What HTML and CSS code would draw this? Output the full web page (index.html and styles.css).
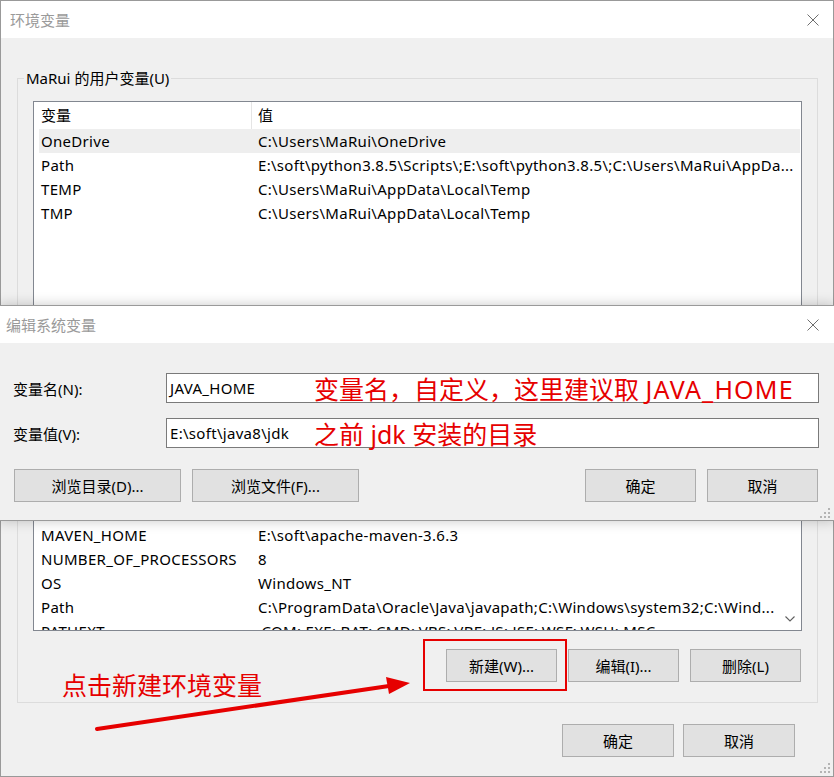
FILE: index.html
```html
<!DOCTYPE html>
<html lang="zh-CN">
<head>
<meta charset="utf-8">
<title>环境变量</title>
<link rel="stylesheet" href="styles.css">
</head>
<body>
<div class="window">
  <div class="titlebar">
    <span class="title">环境变量</span>
    <svg class="close" viewBox="0 0 12 12"><path d="M0.5 0.5 L11.5 11.5 M11.5 0.5 L0.5 11.5" stroke="#6e6e6e" stroke-width="1" fill="none"/></svg>
  </div>
  <div class="content">
    <div class="group group-user">
      <div class="legend">MaRui 的用户变量(U)</div>
      <div class="list list-user">
        <div class="list-main">
          <div class="row head"><span class="c1">变量</span><span class="c2">值</span></div>
          <div class="row sel"><span class="c1">OneDrive</span><span class="c2">C:\Users\MaRui\OneDrive</span></div>
          <div class="row"><span class="c1">Path</span><span class="c2">E:\soft\python3.8.5\Scripts\;E:\soft\python3.8.5\;C:\Users\MaRui\AppDa...</span></div>
          <div class="row"><span class="c1">TEMP</span><span class="c2">C:\Users\MaRui\AppData\Local\Temp</span></div>
          <div class="row"><span class="c1">TMP</span><span class="c2">C:\Users\MaRui\AppData\Local\Temp</span></div>
        </div>
      </div>
    </div>
    <div class="group group-sys">
      <div class="legend">系统变量(S)</div>
      <div class="list list-sys">
        <div class="list-main">
          <div class="row head"><span class="c1">变量</span><span class="c2">值</span></div>
          <div class="row"><span class="c1">DriverData</span><span class="c2">C:\Windows\System32\Drivers\DriverData</span></div>
          <div class="row"><span class="c1">MAVEN_HOME</span><span class="c2">E:\soft\apache-maven-3.6.3</span></div>
          <div class="row"><span class="c1">NUMBER_OF_PROCESSORS</span><span class="c2">8</span></div>
          <div class="row"><span class="c1">OS</span><span class="c2">Windows_NT</span></div>
          <div class="row"><span class="c1">Path</span><span class="c2">C:\ProgramData\Oracle\Java\javapath;C:\Windows\system32;C:\Wind...</span></div>
          <div class="row"><span class="c1">PATHEXT</span><span class="c2">.COM;.EXE;.BAT;.CMD;.VBS;.VBE;.JS;.JSE;.WSF;.WSH;.MSC</span></div>
        </div>
        <div class="vscroll">
          <svg class="chev" viewBox="0 0 10 6"><path d="M0.5 0.5 L5 5 L9.5 0.5" stroke="#606060" stroke-width="1.1" fill="none"/></svg>
        </div>
      </div>
      <div class="btn-row">
        <button class="btn">新建(W)...</button>
        <button class="btn">编辑(I)...</button>
        <button class="btn">删除(L)</button>
      </div>
    </div>
    <div class="footer">
      <button class="btn btn-footer">确定</button>
      <button class="btn btn-footer">取消</button>
    </div>
  </div>
  <svg class="grip grip-main" viewBox="0 0 12 12"><g fill="#b4b4b4"><rect x="9" y="1" width="2" height="2"/><rect x="5" y="5" width="2" height="2"/><rect x="9" y="5" width="2" height="2"/><rect x="1" y="9" width="2" height="2"/><rect x="5" y="9" width="2" height="2"/><rect x="9" y="9" width="2" height="2"/></g></svg>
</div>

<div class="dialog">
  <div class="dlg-title">
    <span class="title">编辑系统变量</span>
    <svg class="close" viewBox="0 0 12 12"><path d="M0.5 0.5 L11.5 11.5 M11.5 0.5 L0.5 11.5" stroke="#6e6e6e" stroke-width="1" fill="none"/></svg>
  </div>
  <div class="dlg-body">
    <div class="field">
      <label class="field-label">变量名(N):</label>
      <div class="input">JAVA_HOME<span class="note">变量名，自定义，这里建议取 <span class="note-latin">JAVA_HOME</span></span></div>
    </div>
    <div class="field">
      <label class="field-label">变量值(V):</label>
      <div class="input">E:\soft\java8\jdk<span class="note">之前 jdk 安装的目录</span></div>
    </div>
    <div class="dlg-buttons">
      <div class="btn-group">
        <button class="btn btn-wide">浏览目录(D)...</button>
        <button class="btn btn-wide">浏览文件(F)...</button>
      </div>
      <div class="btn-group">
        <button class="btn">确定</button>
        <button class="btn">取消</button>
      </div>
    </div>
  </div>
  <svg class="grip grip-dlg" viewBox="0 0 12 12"><g fill="#b4b4b4"><rect x="9" y="1" width="2" height="2"/><rect x="5" y="5" width="2" height="2"/><rect x="9" y="5" width="2" height="2"/><rect x="1" y="9" width="2" height="2"/><rect x="5" y="9" width="2" height="2"/><rect x="9" y="9" width="2" height="2"/></g></svg>
</div>

<div class="annot-box"></div>
<div class="annot-text">点击新建环境变量</div>
<svg class="annot-arrow" viewBox="0 0 834 777">
  <path d="M97 729 L389 686" stroke="#e60000" stroke-width="4" stroke-linecap="round" fill="none"/>
  <polygon points="410,683 386,677 389,694" fill="#e60000"/>
</svg>
</body>
</html>
```

FILE: styles.css
```css
* { box-sizing: border-box; }
html, body { margin: 0; padding: 0; }
body {
  width: 834px;
  height: 777px;
  overflow: hidden;
  position: relative;
  font-family: "Noto Sans", "Noto Sans CJK SC", sans-serif;
  font-size: 15px;
  color: #000;
  background: #f0f0f0;
}

.window {
  width: 834px;
  height: 777px;
  border: 1px solid #999;
  background: #f0f0f0;
  display: flex;
  flex-direction: column;
  position: relative;
}

.titlebar {
  flex: none;
  height: 37px;
  background: #fff;
  display: flex;
  align-items: center;
  justify-content: space-between;
  padding: 0 14px 0 9px;
}

.title {
  color: #9a9a9a;
  font-size: 15px;
  line-height: 20px;
}

.close { width: 12px; height: 12px; display: block; }

.content {
  flex: 1;
  padding: 40px 15px 0 16px;
  display: flex;
  flex-direction: column;
}

.group {
  border: 1px solid #dcdcdc;
  padding: 0 15px;
  display: flex;
  flex-direction: column;
}
.group-user { padding-bottom: 12px; }
.group-sys { margin-top: 34px; padding-bottom: 20px; }

.legend {
  align-self: flex-start;
  height: 20px;
  line-height: 20px;
  margin: -11px 0 0 -9px;
  padding: 0 2px;
  background: #f0f0f0;
}

.list {
  margin-top: 13px;
  border: 1px solid #828790;
  background: #fff;
  display: flex;
  overflow: hidden;
}
.list-user { height: 300px; }
.list-sys { height: 160px; }

.list-main {
  flex: 1;
  min-width: 0;
  padding: 0 1px 0 5px;
}

.row {
  display: flex;
  height: 24px;
  line-height: 24px;
  white-space: nowrap;
  letter-spacing: 0.3px;
}
.row.head { height: 27px; line-height: 27px; letter-spacing: 0; }
.row.sel { background: #eeeeee; }

.c1 {
  flex: none;
  width: 213px;
  padding-left: 2px;
  overflow: hidden;
}
.head .c1 { border-right: 1px solid #e5e5e5; }
.c2 {
  flex: 1;
  min-width: 0;
  padding-left: 6px;
  overflow: hidden;
}

.vscroll {
  flex: none;
  width: 17px;
  display: flex;
  align-items: flex-end;
  padding: 0 0 8px 1px;
}
.chev { width: 10px; height: 6px; display: block; }

.btn {
  height: 33px;
  width: 111px;
  padding: 0;
  margin: 0;
  border: 1px solid #adadad;
  background: #e1e1e1;
  font-family: "Noto Sans", "Noto Sans CJK SC", sans-serif;
  font-size: 15px;
  color: #000;
}

.btn-row {
  display: flex;
  justify-content: flex-end;
  gap: 11px;
  margin-top: 18px;
  padding-right: 1px;
}

.footer {
  display: flex;
  justify-content: flex-end;
  gap: 9px;
  margin-top: 21px;
  padding-right: 23px;
}
.btn-footer { width: 112px; }

.grip { position: absolute; width: 12px; height: 12px; }
.grip-main { right: 2px; bottom: 2px; }
.grip-dlg { right: 3px; bottom: 1px; }

/* edit dialog on top */
.dialog {
  position: absolute;
  left: -1px;
  top: 305px;
  width: 836px;
  border: 1px solid #9a9a9a;
  background: #f0f0f0;
  box-shadow: 0 0 12px rgba(0, 0, 0, 0.22);
}
.dlg-title {
  height: 37px;
  background: #fff;
  display: flex;
  align-items: center;
  justify-content: space-between;
  padding: 0 15px 0 6px;
}
.dlg-body { padding: 30px 15px 18px 13px; }

.field {
  display: flex;
  align-items: center;
  height: 30px;
}
.field + .field { margin-top: 15px; }
.field-label { flex: none; width: 153px; }

.input {
  flex: 1;
  height: 30px;
  border: 1px solid #7a7a7a;
  background: #fff;
  padding-left: 3px;
  line-height: 28px;
  position: relative;
  white-space: nowrap;
  letter-spacing: 0.3px;
}
.note {
  position: absolute;
  left: 147px;
  top: 1px;
  color: #e60000;
  font-size: 25px;
  line-height: 28px;
  letter-spacing: 0;
}
.note-latin { letter-spacing: 1.2px; }

.dlg-buttons {
  display: flex;
  justify-content: space-between;
  margin-top: 21px;
  padding: 0 1px;
}
.btn-group { display: flex; gap: 11px; }
.btn-wide { width: 167px; }

/* annotations */
.annot-box {
  position: absolute;
  left: 423px;
  top: 639px;
  width: 144px;
  height: 52px;
  border: 2px solid #e60000;
}
.annot-text {
  position: absolute;
  left: 62px;
  top: 670px;
  color: #e60000;
  font-size: 25px;
  line-height: 30px;
  white-space: nowrap;
}
.annot-arrow {
  position: absolute;
  left: 0;
  top: 0;
  width: 834px;
  height: 777px;
  pointer-events: none;
}
```
